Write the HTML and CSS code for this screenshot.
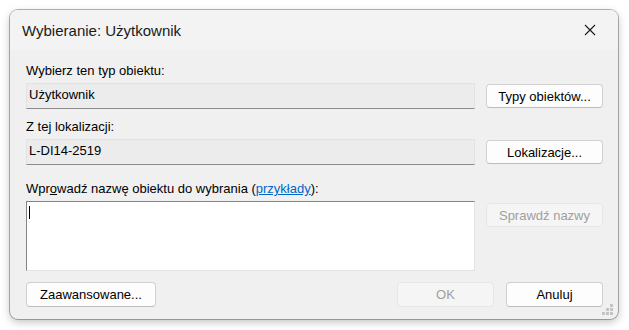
FILE: index.html
```html
<!DOCTYPE html>
<html lang="pl">
<head>
  <meta charset="UTF-8" />
  <title>Wybieranie: Użytkownik</title>
  <link rel="stylesheet" href="styles.css">
</head>
<body>
  <div class="window">
    <!-- Title bar -->
    <div class="titlebar">
      <span class="title">Wybieranie: Użytkownik</span>
      <span class="close">
        <svg width="12" height="12" viewBox="0 0 12 12"><path d="M1 1 L11 11 M11 1 L1 11" stroke="#1a1a1a" stroke-width="1.1" fill="none"/></svg>
      </span>
    </div>

    <div class="content">
      <div class="label">Wybierz ten typ obiektu:</div>
      <div class="row">
        <div class="field">Użytkownik</div>
        <button class="btn">Typy obiektów...</button>
      </div>

      <div class="label second">Z tej lokalizacji:</div>
      <div class="row">
        <div class="field">L-DI14-2519</div>
        <button class="btn">Lokalizacje...</button>
      </div>

      <div class="label third">Wpr<u>o</u>wadź nazwę obiektu do wybrania (<a href="#">przykłady</a>):</div>
      <div class="row top">
        <div class="names"><span class="caret"></span></div>
        <button class="btn disabled">Sprawdź nazwy</button>
      </div>

      <div class="footer">
        <button class="btn wide">Zaawansowane...</button>
        <div class="spacer"></div>
        <button class="btn disabled ok">OK</button>
        <button class="btn ok">Anuluj</button>
      </div>
    </div>

    <svg class="grip" width="12" height="12" viewBox="0 0 12 12">
      <rect x="8" y="0" width="3" height="3" fill="#c4c4c4"/>
      <rect x="4" y="4" width="3" height="3" fill="#c4c4c4"/>
      <rect x="8" y="4" width="3" height="3" fill="#c4c4c4"/>
      <rect x="0" y="8" width="3" height="3" fill="#c4c4c4"/>
      <rect x="4" y="8" width="3" height="3" fill="#c4c4c4"/>
      <rect x="8" y="8" width="3" height="3" fill="#c4c4c4"/>
    </svg>
  </div>
</body>
</html>
```

FILE: styles.css
```css
body {
  margin: 0;
  background: #ffffff;
  font-family: "Liberation Sans", Arial, sans-serif;
  font-size: 13px;
  color: #000;
}

.window {
  position: relative;
  margin: 10px;
  width: 608px;
  height: 309px;
  box-sizing: border-box;
  background: #f0f0f0;
  border-radius: 8px;
  box-shadow: 0 0 0 1px rgba(0, 0, 0, 0.28), 0 3px 9px rgba(0, 0, 0, 0.25);
  overflow: hidden;
}

/* Title bar */
.titlebar {
  height: 40px;
  display: flex;
  align-items: center;
  justify-content: space-between;
  padding: 0 22px 0 12px;
  background: #f3f3f3;
}

.title {
  font-size: 15px;
  color: #1a1a1a;
}

.close {
  display: flex;
}

/* Content */
.content {
  padding: 13px 15px 0 16px;
}

.label {
  height: 16px;
  line-height: 16px;
  margin-bottom: 4px;
}

.label.second {
  margin-top: 10px;
}

.label.third {
  margin-top: 16px;
}

.label a {
  color: #0066cc;
}

.row {
  display: flex;
  align-items: center;
  gap: 11px;
}

.row.top {
  align-items: flex-start;
}

.field {
  width: 449px;
  height: 26px;
  box-sizing: border-box;
  padding: 3px 2px 0;
  line-height: 16px;
  background: #ececec;
  border: 1px solid #e2e2e2;
  border-bottom-color: #8c8c8c;
}

.names {
  width: 449px;
  height: 70px;
  box-sizing: border-box;
  background: #fff;
  border: 1px solid #e3e3e3;
  border-top-color: #828282;
  border-left-color: #828282;
  padding: 4px 2px;
}

.caret {
  display: block;
  width: 1px;
  height: 13px;
  background: #000;
}

.names + .btn {
  margin-top: 2px;
}

/* Buttons */
.btn {
  width: 117px;
  height: 24px;
  padding: 0;
  font-family: inherit;
  font-size: 13px;
  color: #000;
  background: #fdfdfd;
  border: 1px solid #d0d0d0;
  border-bottom-color: #bcbcbc;
  border-radius: 4px;
}

.btn.disabled {
  color: #a0a0a0;
  background: #f5f5f5;
  border-color: #e6e6e6;
}

.btn.wide {
  width: 130px;
  height: 25px;
}

.btn.ok {
  width: 97px;
  height: 25px;
}

.footer {
  display: flex;
  align-items: center;
  gap: 12px;
  margin-top: 11px;
}

.spacer {
  flex: 1;
}

.grip {
  position: absolute;
  right: 4px;
  bottom: 3px;
}
```
